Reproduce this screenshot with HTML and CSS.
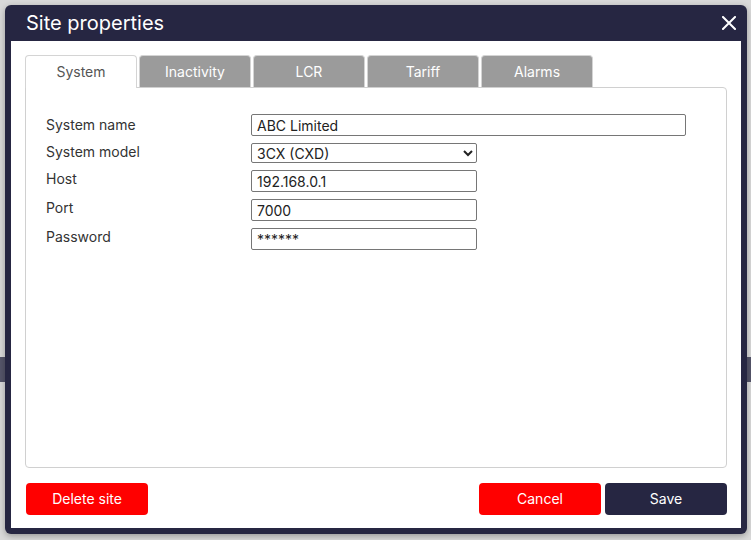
FILE: index.html
```html
<!DOCTYPE html>
<html lang="en">
<head>
<meta charset="utf-8">
<title>Site properties</title>
<link rel="stylesheet" href="styles.css">
</head>
<body>
<div class="dialog">
  <div class="dialog-header">
    <h1 class="dialog-title">Site properties</h1>
    <button class="close-btn" aria-label="Close">
      <svg width="14" height="14" viewBox="0 0 14 14"><path d="M1 1 L13 13 M13 1 L1 13" stroke="#fff" stroke-width="2" stroke-linecap="square" fill="none"/></svg>
    </button>
  </div>
  <div class="dialog-body">
    <div class="tabs">
      <div class="tab tab-active">System</div>
      <div class="tab">Inactivity</div>
      <div class="tab">LCR</div>
      <div class="tab">Tariff</div>
      <div class="tab">Alarms</div>
    </div>
    <div class="panel">
      <div class="form">
        <label class="form-label form-label-first">System name</label>
        <input class="field field-wide" type="text" value="ABC Limited">
        <label class="form-label">System model</label>
        <select class="field field-select"><option>3CX (CXD)</option></select>
        <label class="form-label">Host</label>
        <input class="field" type="text" value="192.168.0.1">
        <label class="form-label">Port</label>
        <input class="field" type="text" value="7000">
        <label class="form-label">Password</label>
        <input class="field" type="text" value="******">
      </div>
    </div>
    <div class="footer">
      <button class="btn btn-red btn-delete">Delete site</button>
      <div class="footer-right">
        <button class="btn btn-red">Cancel</button>
        <button class="btn btn-dark">Save</button>
      </div>
    </div>
  </div>
</div>
</body>
</html>
```

FILE: styles.css
```css
html, body {
  margin: 0;
  padding: 0;
}
body {
  width: 751px;
  height: 540px;
  overflow: hidden;
  background:
    linear-gradient(to bottom, transparent 357px, #55556a 357px, #55556a 382px, transparent 382px),
    #d9d9d9;
  font-family: Inter, "Noto Sans", sans-serif;
  padding: 5px;
  box-sizing: border-box;
}
.dialog {
  width: 742px;
  height: 529px;
  box-sizing: border-box;
  background: #262642;
  border-radius: 6px;
  padding: 0 6px 6px;
  display: flex;
  flex-direction: column;
  box-shadow: 0 2px 6px rgba(0,0,0,0.3);
}
.dialog-header {
  height: 36px;
  display: flex;
  align-items: center;
  justify-content: space-between;
  padding: 0 5px 0 15px;
}
.dialog-title {
  margin: 0;
  font-size: 20px;
  font-weight: 400;
  color: #fff;
  line-height: 24px;
}
.close-btn {
  background: none;
  border: none;
  padding: 0;
  width: 14px;
  height: 14px;
  display: flex;
  cursor: pointer;
}
.dialog-body {
  flex: 1;
  background: #fff;
  padding: 14px 14px 13px;
  display: flex;
  flex-direction: column;
}
.tabs {
  display: flex;
  gap: 2px;
  height: 32px;
}
.tab {
  width: 112px;
  height: 33px;
  box-sizing: border-box;
  border: 1px solid #d4d4d4;
  border-bottom: none;
  border-radius: 4px 4px 0 0;
  background: #9b9b9b;
  color: #fff;
  font-size: 14px;
  display: flex;
  align-items: center;
  justify-content: center;
  padding-bottom: 1px;
}
.tab-active {
  background: #fff;
  color: #555;
  position: relative;
  z-index: 1;
}
.panel {
  flex: 1;
  border: 1px solid #d0d0d0;
  border-radius: 0 4px 4px 4px;
  padding: 26px 20px;
}
.form {
  display: grid;
  grid-template-columns: 205px 1fr;
  row-gap: 7px;
  align-items: start;
}
.form-label {
  font-size: 14px;
  line-height: 18px;
  color: #333;
}
.form-label-first {
  padding-top: 2px;
}
.field {
  width: 226px;
  height: 22px;
  box-sizing: border-box;
  border: 1px solid #767676;
  border-radius: 2px;
  padding: 0 5px;
  font-family: Inter, "Noto Sans", sans-serif;
  font-size: 14px;
  color: #222;
  margin: 0;
}
.field-wide {
  width: 435px;
}
.field-select {
  height: 20px;
  padding: 0 1px;
  background: #fff;
}
.footer {
  display: flex;
  justify-content: space-between;
  margin-top: 15px;
}
.footer-right {
  display: flex;
  gap: 4px;
}
.btn {
  width: 122px;
  height: 32px;
  border: none;
  border-radius: 4px;
  font-family: Inter, "Noto Sans", sans-serif;
  font-size: 14px;
  color: #fff;
  cursor: pointer;
  padding: 0 0 2px;
}
.btn-delete {
  margin-left: 1px;
}
.btn-red {
  background: #ff0000;
}
.btn-dark {
  background: #262642;
}
```
